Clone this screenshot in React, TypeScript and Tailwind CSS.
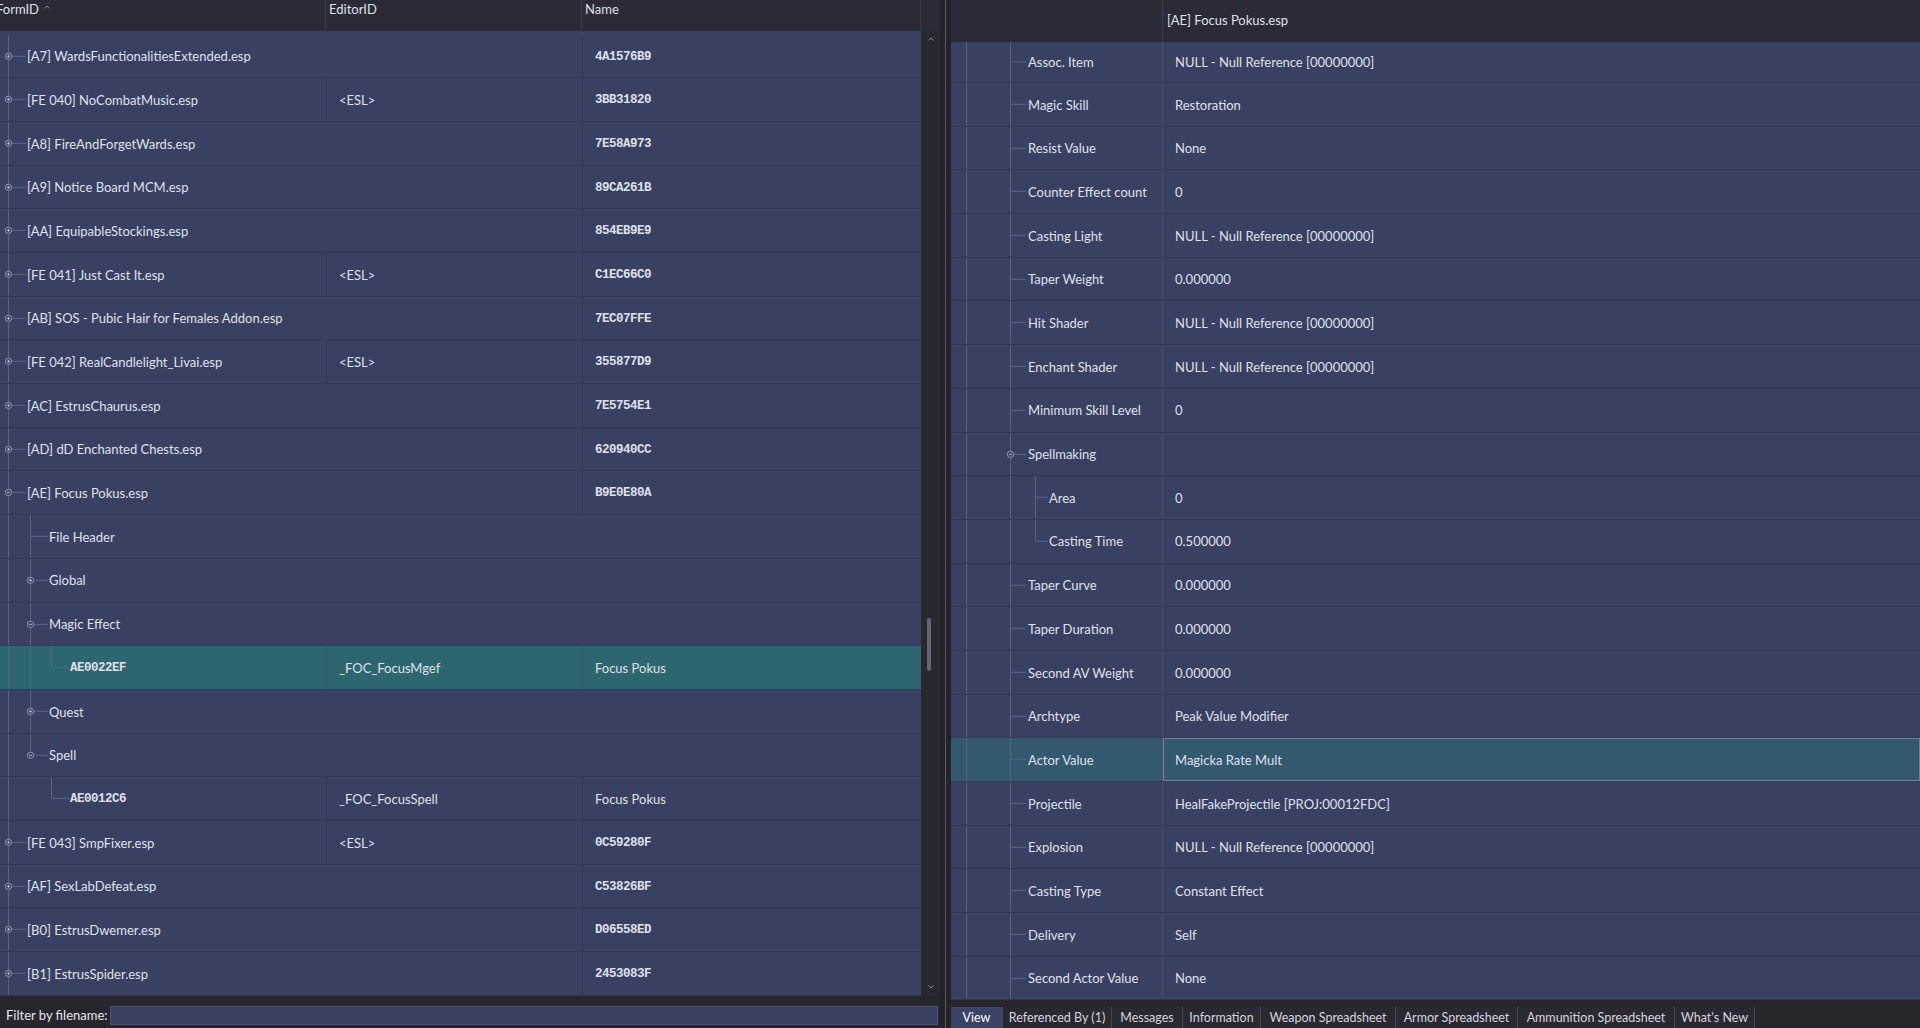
import React from 'react';

type LeftRow = {
    level: 0 | 1 | 2;
    exp?: 'plus' | 'minus';
    text: string;
    mono?: boolean;
    editor?: string;
    name?: string;
    nameMono?: boolean;
    sel?: boolean;
    g1?: 'full' | 'half';
    g2?: 'full' | 'half';
};

const leftRows: LeftRow[] = [
    { level: 0, exp: 'plus', text: '[A7] WardsFunctionalitiesExtended.esp', name: '4A1576B9', nameMono: true },
    { level: 0, exp: 'plus', text: '[FE 040] NoCombatMusic.esp', editor: '<ESL>', name: '3BB31820', nameMono: true },
    { level: 0, exp: 'plus', text: '[A8] FireAndForgetWards.esp', name: '7E58A973', nameMono: true },
    { level: 0, exp: 'plus', text: '[A9] Notice Board MCM.esp', name: '89CA261B', nameMono: true },
    { level: 0, exp: 'plus', text: '[AA] EquipableStockings.esp', name: '854EB9E9', nameMono: true },
    { level: 0, exp: 'plus', text: '[FE 041] Just Cast It.esp', editor: '<ESL>', name: 'C1EC66C0', nameMono: true },
    { level: 0, exp: 'plus', text: '[AB] SOS - Pubic Hair for Females Addon.esp', name: '7EC07FFE', nameMono: true },
    { level: 0, exp: 'plus', text: '[FE 042] RealCandlelight_Livai.esp', editor: '<ESL>', name: '355877D9', nameMono: true },
    { level: 0, exp: 'plus', text: '[AC] EstrusChaurus.esp', name: '7E5754E1', nameMono: true },
    { level: 0, exp: 'plus', text: '[AD] dD Enchanted Chests.esp', name: '620940CC', nameMono: true },
    { level: 0, exp: 'minus', text: '[AE] Focus Pokus.esp', name: 'B9E0E80A', nameMono: true },
    { level: 1, text: 'File Header', g1: 'full' },
    { level: 1, exp: 'plus', text: 'Global', g1: 'full' },
    { level: 1, exp: 'minus', text: 'Magic Effect', g1: 'full' },
    { level: 2, text: 'AE0022EF', mono: true, editor: '_FOC_FocusMgef', name: 'Focus Pokus', sel: true, g1: 'full', g2: 'half' },
    { level: 1, exp: 'plus', text: 'Quest', g1: 'full' },
    { level: 1, exp: 'minus', text: 'Spell', g1: 'half' },
    { level: 2, text: 'AE0012C6', mono: true, editor: '_FOC_FocusSpell', name: 'Focus Pokus', g2: 'half' },
    { level: 0, exp: 'plus', text: '[FE 043] SmpFixer.esp', editor: '<ESL>', name: '0C59280F', nameMono: true },
    { level: 0, exp: 'plus', text: '[AF] SexLabDefeat.esp', name: 'C53826BF', nameMono: true },
    { level: 0, exp: 'plus', text: '[B0] EstrusDwemer.esp', name: 'D06558ED', nameMono: true },
    { level: 0, exp: 'plus', text: '[B1] EstrusSpider.esp', name: '2453083F', nameMono: true },
];

type RightRow = { label: string; value: string; deep?: 'full' | 'half'; exp?: boolean; sel?: boolean };

const rightRows: RightRow[] = [
    { label: 'Assoc. Item', value: 'NULL - Null Reference [00000000]' },
    { label: 'Magic Skill', value: 'Restoration' },
    { label: 'Resist Value', value: 'None' },
    { label: 'Counter Effect count', value: '0' },
    { label: 'Casting Light', value: 'NULL - Null Reference [00000000]' },
    { label: 'Taper Weight', value: '0.000000' },
    { label: 'Hit Shader', value: 'NULL - Null Reference [00000000]' },
    { label: 'Enchant Shader', value: 'NULL - Null Reference [00000000]' },
    { label: 'Minimum Skill Level', value: '0' },
    { label: 'Spellmaking', value: '', exp: true },
    { label: 'Area', value: '0', deep: 'full' },
    { label: 'Casting Time', value: '0.500000', deep: 'half' },
    { label: 'Taper Curve', value: '0.000000' },
    { label: 'Taper Duration', value: '0.000000' },
    { label: 'Second AV Weight', value: '0.000000' },
    { label: 'Archtype', value: 'Peak Value Modifier' },
    { label: 'Actor Value', value: 'Magicka Rate Mult', sel: true },
    { label: 'Projectile', value: 'HealFakeProjectile [PROJ:00012FDC]' },
    { label: 'Explosion', value: 'NULL - Null Reference [00000000]' },
    { label: 'Casting Type', value: 'Constant Effect' },
    { label: 'Delivery', value: 'Self' },
    { label: 'Second Actor Value', value: 'None' },
];

const tabs = [
    { t: 'View', w: 'w-[52px]' },
    { t: 'Referenced By (1)', w: 'w-[109px]' },
    { t: 'Messages', w: 'w-[71px]' },
    { t: 'Information', w: 'w-[78px]' },
    { t: 'Weapon Spreadsheet', w: 'w-[135px]' },
    { t: 'Armor Spreadsheet', w: 'w-[122px]' },
    { t: 'Ammunition Spreadsheet', w: 'w-[157px]' },
    { t: "What's New", w: 'w-[80px]' },
];

const LINE = '#5a6186';

const Expander = ({ x, kind }: { x: number; kind: 'plus' | 'minus' }) => (
    <g>
        <circle cx={x} cy="50%" r="3.2" fill="#3f4769" stroke="#8a91b0" strokeWidth="1" />
        <line x1={x - 1.5} x2={x + 1.5} y1="50%" y2="50%" stroke="#aab0c8" strokeWidth="1" />
        {kind === 'plus' && (
            <svg x={x - 1} y="50%" overflow="visible">
                <line x1="1" x2="1" y1="-1.5" y2="1.5" stroke="#aab0c8" strokeWidth="1" />
            </svg>
        )}
    </g>
);

const LeftTree = ({ row }: { row: LeftRow }) => {
    const w = row.level === 0 ? 27 : row.level === 1 ? 49 : 70;
    return (
        <svg width={w} className="h-full shrink-0">
            <line x1="8.5" x2="8.5" y1="0" y2="100%" stroke={LINE} />
            {row.level === 0 && <line x1="8.5" x2="26" y1="50%" y2="50%" stroke={LINE} />}
            {row.g1 && <line x1="30.5" x2="30.5" y1="0" y2={row.g1 === 'full' ? '100%' : '50%'} stroke={LINE} />}
            {row.level === 1 && <line x1="30.5" x2="48" y1="50%" y2="50%" stroke={LINE} />}
            {row.g2 && <line x1="51.5" x2="51.5" y1="0" y2="50%" stroke={LINE} />}
            {row.level === 2 && <line x1="51.5" x2="69" y1="50%" y2="50%" stroke={LINE} />}
            {row.exp && <Expander x={row.level === 0 ? 8.5 : 30.5} kind={row.exp} />}
        </svg>
    );
};

const RightTree = ({ row }: { row: RightRow }) => {
    const w = row.deep ? 98 : 77;
    return (
        <svg width={w} className="h-full shrink-0">
            <line x1="15.5" x2="15.5" y1="0" y2="100%" stroke={LINE} />
            <line x1="59.5" x2="59.5" y1="0" y2="100%" stroke={LINE} />
            {!row.deep && <line x1="59.5" x2="75" y1="50%" y2="50%" stroke={LINE} />}
            {row.deep && <line x1="84.5" x2="84.5" y1="0" y2={row.deep === 'full' ? '100%' : '50%'} stroke={LINE} />}
            {row.deep && <line x1="84.5" x2="97" y1="50%" y2="50%" stroke={LINE} />}
            {row.exp && <Expander x={59.5} kind="minus" />}
        </svg>
    );
};

const Chevron = ({ up }: { up?: boolean }) => (
    <svg width="6" height="4" viewBox="0 0 6 4">
        <path d={up ? 'M0.5 3.5 L3 1 L5.5 3.5' : 'M0.5 0.5 L3 3 L5.5 0.5'} fill="none" stroke="#8b8a98" strokeWidth="1" />
    </svg>
);

const mono = "font-['Liberation_Mono',_monospace] font-bold text-[12.5px] tracking-[-0.5px]";

export default function App() {
    return (
        <div className="w-[1920px] h-[1028px] flex bg-[#232229] overflow-hidden font-['Lato',_sans-serif] text-[13px] text-[#dfe0ea]">
            {/* Left: plugin tree */}
            <div className="w-[940px] flex flex-col shrink-0">
                <div className="h-[996px] flex flex-col">
                    <div className="h-[31px] flex bg-[#2b2a37] shrink-0">
                        <div className="w-[326px] border-r border-[#3c3b49] flex items-start pt-[1px] leading-[16px] overflow-hidden">
                            <span className="ml-[-4px]">FormID</span>
                            <span className="ml-[5px] mt-[4px]"><Chevron up /></span>
                        </div>
                        <div className="w-[256px] border-r border-[#3c3b49] pl-[3px] pt-[1px] leading-[16px]">EditorID</div>
                        <div className="w-[339px] border-r border-[#3c3b49] pl-[3px] pt-[1px] leading-[16px]">Name</div>
                        <div className="flex-1" />
                    </div>
                    <div className="flex-1 flex min-h-0">
                        <div className="w-[921px] bg-[#394163] pt-[3.6px] overflow-hidden">
                            {leftRows.map((r, i) => (
                                <div key={i} className={`flex h-[43.7px] border-b border-[#323959] ${r.sel ? 'bg-[#2e6670]' : ''}`}>
                                    <div className="w-[326px] flex items-center overflow-hidden shrink-0">
                                        <LeftTree row={r} />
                                        <span className={`pt-[2px] ${r.mono ? mono : ''}`}>{r.text}</span>
                                    </div>
                                    <div className={`w-[256px] shrink-0 flex items-center pl-[12px] pt-[2px] ${r.editor ? (r.sel ? 'border-l border-[#2a5b66]' : 'border-l border-[#323959]') : ''}`}>
                                        {r.editor}
                                    </div>
                                    <div className={`flex-1 flex items-center pl-[12px] pt-[2px] ${r.name ? (r.sel ? 'border-l border-[#2a5b66]' : 'border-l border-[#323959]') : ''}`}>
                                        <span className={r.nameMono ? mono : ''}>{r.name}</span>
                                    </div>
                                </div>
                            ))}
                        </div>
                        <div className="w-[19px] bg-[#29282f] flex flex-col items-center">
                            <div className="mt-[6px] h-[4px] flex"><Chevron up /></div>
                            <div className="mt-[577px] w-[4px] h-[53px] rounded-full bg-[#676675] ml-[-3px]" />
                            <div className="mt-[314px] h-[4px] flex"><Chevron /></div>
                        </div>
                    </div>
                </div>
                <div className="flex-1 flex items-center pt-[7px] bg-[#27262d]">
                    <span className="pl-[6px] w-[110px] shrink-0 text-[#e3e3ea]">Filter by filename:</span>
                    <div className="w-[828px] h-[19px] bg-[#394163] border border-[#4a5174]" />
                </div>
            </div>

            {/* Splitter */}
            <div className="w-[11px] pl-[5px] shrink-0">
                <div className="w-px h-full bg-[#5b5a67]" />
            </div>

            {/* Right: record view */}
            <div className="flex-1 flex flex-col min-w-0">
                <div className="h-[1000px] flex flex-col bg-[#394163] overflow-hidden">
                    <div className="h-[42px] shrink-0 flex bg-[#2b2a37]">
                        <div className="w-[212px] border-r border-[#3c3b49]" />
                        <div className="flex-1 flex items-center pl-[4px]">[AE] Focus Pokus.esp</div>
                    </div>
                    {rightRows.map((r, i) => (
                        <div
                            key={i}
                            className={`flex ${i === 0 ? 'h-[41px]' : 'h-[43.7px]'} shrink-0 border-b border-[#323959] ${r.sel ? 'bg-[#33596f]' : ''}`}
                        >
                            <div className="w-[212px] shrink-0 flex items-center border-r border-[#4a5174]">
                                <RightTree row={r} />
                                <span className="pt-[2px]">{r.label}</span>
                            </div>
                            <div className={`flex-1 flex items-center pt-[2px] ${r.sel ? 'border border-[#6f8598] pl-[11px]' : 'pl-[12px]'}`}>{r.value}</div>
                        </div>
                    ))}
                </div>
                <div className="flex-1 flex items-end bg-[#26252c]">
                    <div className="h-[21px] flex">
                        {tabs.map((t, i) => (
                            <div
                                key={t.t}
                                className={`${t.w} h-full flex items-center justify-center pt-[2px] border-r border-[#45444f] text-[12.5px] ${i === 0 ? 'bg-[#3a4467] text-white' : 'bg-[#2a2931] text-[#d4d4dd]'}`}
                            >
                                {t.t}
                            </div>
                        ))}
                    </div>
                </div>
            </div>
        </div>
    );
}
